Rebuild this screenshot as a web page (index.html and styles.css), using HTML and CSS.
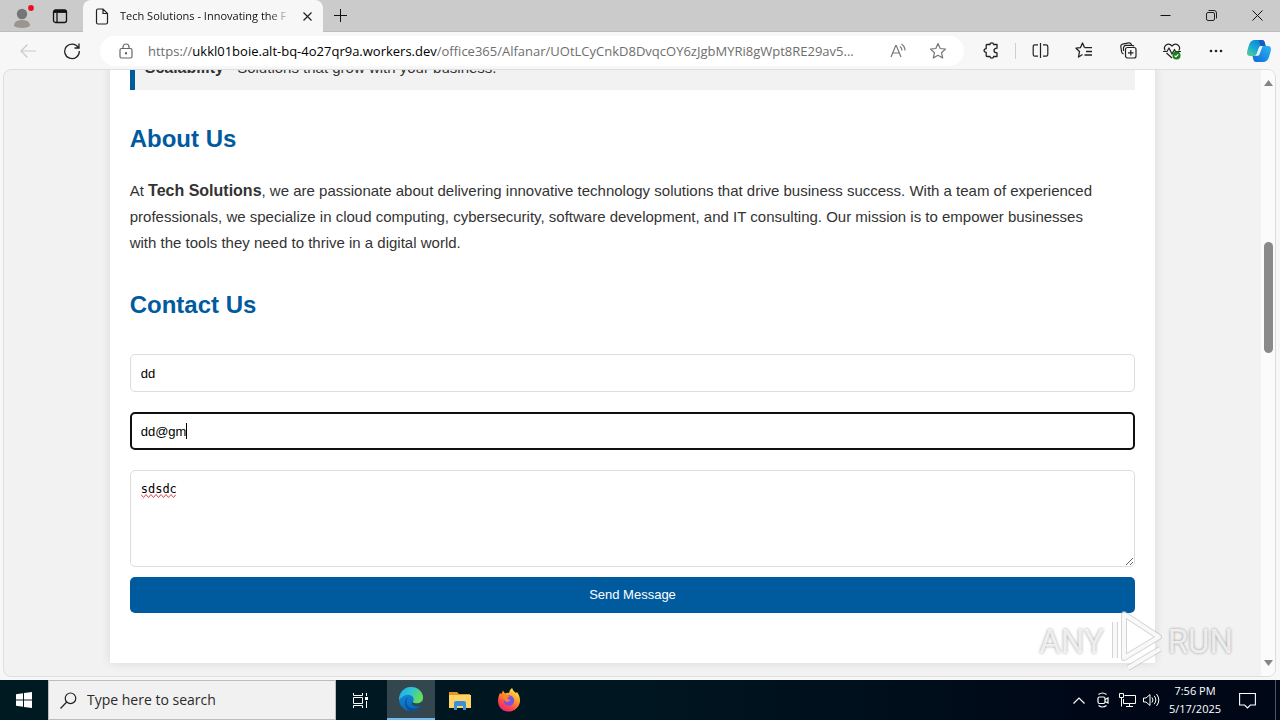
FILE: index.html
```html
<!DOCTYPE html>
<html lang="en">
<head>
<meta charset="utf-8">
<title>Tech Solutions - Innovating the Future</title>
<link rel="stylesheet" href="styles.css">
</head>
<body>
<header class="tabstrip">
  <button class="strip-btn avatar" aria-label="Profile">
    <svg width="24" height="24" viewBox="-1 0 24 24"><circle cx="11" cy="10" r="5.200" fill="#757575"/><path d="M3 22c0-4 3-6 8-6s8 2 8 6c-3 2.500-13 2.500-16 0z" fill="#9b9590"/><circle cx="20" cy="4" r="2.900" fill="#e81123"/></svg>
  </button>
  <button class="strip-btn workspace" aria-label="Tab actions">
    <svg width="16" height="16" viewBox="0 0 16 16" fill="none" stroke="#111" stroke-width="1.300"><rect x="1.500" y="2" width="13" height="12.500" rx="2"/><path d="M2 3.500h12" stroke-width="2.800"/><path d="M5 5v9"/></svg>
  </button>
  <div class="tab">
    <svg width="14" height="17" viewBox="0 0 14 17" fill="none" stroke="#222" stroke-width="1.200"><path d="M1.500 2.500q0-1.500 1.500-1.500h5l4.500 4.500v9q0 1.500-1.500 1.500h-8q-1.500 0-1.500-1.500zM8 1v4.500h4.500"/></svg>
    <span class="tab-title">Tech Solutions - Innovating the F</span>
    <button class="tab-close" aria-label="Close tab"><svg width="9" height="9" viewBox="0 0 9 9" stroke="#222" stroke-width="1.200"><path d="M.5.5l8 8m0-8l-8 8"/></svg></button>
  </div>
  <button class="new-tab" aria-label="New tab"><svg width="15" height="15" viewBox="0 0 15 15" stroke="#111"><path d="M7.500 1v13M1 7.500h13"/></svg></button>
  <div class="window-controls">
    <button aria-label="Minimize"><svg width="11" height="11" viewBox="0 0 11 11" stroke="#111"><path d="M.5 5.500h10"/></svg></button>
    <button aria-label="Restore"><svg width="11" height="11" viewBox="0 0 11 11" fill="none" stroke="#222"><rect x=".5" y="2.500" width="8" height="8" rx="1.500"/><path d="M2.500.5h5.500q2.500 0 2.500 2.500v5.500"/></svg></button>
    <button aria-label="Close"><svg width="11" height="11" viewBox="0 0 11 11" stroke="#111"><path d="M.5.5l10 10m0-10l-10 10"/></svg></button>
  </div>
</header>

<nav class="toolbar">
  <button class="tool" aria-label="Back"><svg width="18" height="16" viewBox="0 0 18 16" fill="none" stroke="#c9c9c9" stroke-width="1.200"><path d="M17 8H2m6.500-6.500L2 8l6.500 6.500"/></svg></button>
  <button class="tool" aria-label="Refresh"><svg width="18" height="18" viewBox="0 0 18 18" fill="none" stroke="#222" stroke-width="1.300"><path d="M15.500 6A7.300 7.300 0 1 0 16.300 9M16 1.500V6h-4.500"/></svg></button>
  <div class="address">
    <svg class="lock" width="14" height="16" viewBox="0 0 14 16" fill="none" stroke="#666" stroke-width="1.200"><rect x="1" y="5.500" width="12" height="9.500" rx="1.500"/><path d="M4 5.500V4a3 3 0 0 1 6 0v1.500"/><circle cx="7" cy="10.200" r=".6" fill="#666"/></svg>
    <a class="url" href="#">https://<span class="host">ukkl01boie.alt-bq-4o27qr9a.workers.dev</span>/office365/Alfanar/UOtLCyCnkD8DvqcOY6zJgbMYRi8gWpt8RE29av5...</a>
    <button class="pill-btn" aria-label="Read aloud"><svg width="16" height="16" viewBox="0 0 16 16" fill="none" stroke="#777" stroke-width="1.200"><path d="M1 14L5.700 2.500h.6L11 14M2.800 10h6.400M10 3.500q2 1.500 2 4M11.500 1q3.500 2.500 3.500 6.500"/></svg></button>
    <button class="pill-btn" aria-label="Add to favorites"><svg width="18" height="18" viewBox="0 0 18 18" fill="none" stroke="#777" stroke-width="1.200" stroke-linejoin="round"><path d="M9 1.500l2.200 5 5.300.6-4 3.600 1.200 5.300L9 13.300 4.300 16l1.200-5.300-4-3.600 5.300-.6z"/></svg></button>
  </div>
  <button class="tool" aria-label="Extensions"><svg width="17" height="17" viewBox="0 0 17 17" fill="none" stroke="#222" stroke-width="1.300" stroke-linejoin="round"><path d="M4 2.500h3q0-1.700 1.800-1.700t1.800 1.700h3.400v3.700q-3 .2-3 2.400t3 2.400v3.500h-3.400q0 1.700-1.800 1.700T7 14.500H4q-.8 0-.8-.8v-3.400Q1 10 1 8.500t2.200-1.800V3.300q0-.8.8-.8z"/></svg></button>
  <span class="divider"></span>
  <button class="tool" aria-label="Split screen"><svg width="17" height="15" viewBox="0 0 17 15" fill="none" stroke="#222" stroke-width="1.200"><path d="M6 1.800H3q-1.800 0-1.800 1.800v7.800q0 1.800 1.800 1.800h3M11 1.800h3q1.800 0 1.800 1.800v7.800q0 1.800-1.800 1.800h-3M8.500 0v15"/></svg></button>
  <button class="tool" aria-label="Favorites"><svg width="18" height="17" viewBox="0 0 18 17" fill="none" stroke="#222" stroke-width="1.300" stroke-linejoin="round"><path d="M9.500 5.600L7.500 1l-2 4.600-4.500.6 3.500 3.300L3.500 15l4-2.500M9.500 5.700H17M11 9.500h6M9.500 13H17"/></svg></button>
  <button class="tool" aria-label="Collections"><svg width="17" height="17" viewBox="0 0 17 17" fill="none" stroke="#222" stroke-width="1.200"><rect x="5.500" y="5.500" width="10.500" height="10.500" rx="2"/><path d="M10.800 8v5.500M8 10.800h5.500M3.500 12Q1.800 11.500 1.600 9.800L.8 4.500Q.6 2.500 2.600 2.100l6-1.200q2-.3 2.700 1.300l.3.800M3.500 9V6q0-2.600 2.600-2.600H12q1.500 0 2 .9"/></svg></button>
  <button class="tool" aria-label="Browser essentials"><svg width="18" height="18" viewBox="0 0 18 18" fill="none" stroke="#222" stroke-width="1.200" stroke-linejoin="round"><path d="M2.200 8.500C-.5 4.500 5-.5 9 4c4-4.500 9.500.5 6.800 4.500M3.500 11L9 16M0 9.500h4l2-3.500 3 6 2.500-4.500 1 2H18"/><circle cx="13.500" cy="13.500" r="4" fill="#16811d" stroke="none"/><path d="M11.600 13.600l1.300 1.300 2.400-2.500" stroke="#fff"/></svg></button>
  <button class="tool" aria-label="Settings and more"><svg width="14" height="4" viewBox="0 0 14 4" fill="#222"><circle cx="2" cy="2" r="1.300"/><circle cx="7" cy="2" r="1.300"/><circle cx="12" cy="2" r="1.300"/></svg></button>
  <button class="tool copilot" aria-label="Copilot">
    <svg width="24" height="22" viewBox="0 0 24 22">
      <defs>
        <linearGradient id="cpA" x1="0" y1="1" x2=".8" y2="0"><stop offset="0" stop-color="#5ad08a"/><stop offset=".5" stop-color="#18a9d8"/><stop offset="1" stop-color="#1176d8"/></linearGradient>
        <linearGradient id="cpB" x1="0" y1="1" x2="1" y2="0"><stop offset="0" stop-color="#1267d8"/><stop offset="1" stop-color="#27b8f5"/></linearGradient>
      </defs>
      <path d="M8 0h7q2 0 2.600 2l1 4h-4q-2 0-2.700 2l-2 6q-.7 2-2.900 2H3q-3 0-3-3 0-2 2-8 1.600-5 6-5z" fill="url(#cpA)"/>
      <path d="M16 22H9q-2 0-2.500-2l-1-4h3q2.500 0 3.200-2l2-6q.8-2 3.300-2h4q3 0 3 3 0 2-2 8-1.600 5-6 5z" fill="url(#cpB)"/>
      <path d="M12.500 6.500h3l-3.500 9H9z" fill="#e9f8ff"/>
      <path d="M12 0h3q2 0 2.600 2l1 4h-4q-1.500 0-1.800-2z" fill="#165bbf"/>
    </svg>
  </button>
</nav>

<section class="viewport">
  <div class="page">
    <main class="card">
      <p class="feature"><strong>Scalability</strong> - Solutions that grow with your business.</p>
      <h2>About Us</h2>
      <p class="about">At <strong>Tech Solutions</strong>, we are passionate about delivering innovative technology solutions that drive business success. With a team of experienced<br>professionals, we specialize in cloud computing, cybersecurity, software development, and IT consulting. Our mission is to empower businesses<br>with the tools they need to thrive in a digital world.</p>
      <h2>Contact Us</h2>
      <form class="contact">
        <input class="field" type="text" aria-label="Name" value="dd">
        <div class="field-wrap">
          <input class="field field-active" type="text" aria-label="Email" value="dd@gm">
          <span class="caret"></span>
        </div>
        <div class="field-wrap message-wrap">
          <textarea class="field message" aria-label="Message" spellcheck="false">sdsdc</textarea>
          <svg class="squiggle" width="35" height="4" viewBox="0 0 35 4" fill="none" stroke="#e5484d"><path d="M0 .5l2.500 3 2.500-3 2.500 3 2.500-3 2.500 3 2.500-3 2.500 3 2.500-3 2.500 3 2.500-3 2.500 3 2.500-3 2.500 3 2.500-3"/></svg>
        </div>
        <button class="send" type="button">Send Message</button>
      </form>
    </main>
  </div>
  <div class="scrollbar">
    <svg width="9" height="6" viewBox="0 0 9 6"><path d="M0 6l4.500-6L9 6z" fill="#858585"/></svg>
    <div class="track"><div class="thumb"></div></div>
    <svg width="9" height="6" viewBox="0 0 9 6"><path d="M0 0l4.500 6L9 0z" fill="#858585"/></svg>
  </div>
  <div class="watermark">
    <span>ANY</span>
    <svg width="60" height="64" viewBox="0 0 60 64" fill="none" stroke-linejoin="round">
      <g stroke="#b8b8b8" stroke-opacity=".6" stroke-width="6"><path d="M18 4v44L53 27zM9 12v36M22 58l32-19"/></g>
      <g stroke="#fff" stroke-opacity=".85" stroke-width="4"><path d="M18 4v44L53 27zM9 12v36M22 58l32-19"/></g>
    </svg>
    <span>RUN</span>
  </div>
</section>

<footer class="taskbar">
  <button class="task" aria-label="Start"><svg width="16" height="16" viewBox="0 0 16 16" fill="#fff"><path d="M0 2.200L7 1.200v6.300H0zM8 1.100L16 0v7.500H8zM0 8.500h7v6.300L0 13.800zM8 8.500h8V16l-8-1.100z"/></svg></button>
  <label class="search">
    <svg width="17" height="17" viewBox="0 0 17 17" fill="none" stroke="#222" stroke-width="1.200"><circle cx="10.500" cy="6.300" r="5.300"/><path d="M6.700 10L.5 16.500"/></svg>
    <input type="text" placeholder="Type here to search" aria-label="Search">
  </label>
  <button class="task" aria-label="Task view"><svg width="17" height="17" viewBox="0 0 17 17" fill="none" stroke="#fff"><path d="M1.500 1v2.500h9V1M1.500 16v-2.500h9V16M1.500 5.500h9v6h-9zM14.500 1v3M14.500 9v7"/><path d="M13 5h3v3h-3z" fill="#fff" stroke="none"/></svg></button>
  <div class="apps">
    <button class="task task-active" aria-label="Microsoft Edge">
      <svg width="24" height="24" viewBox="0 0 24 24">
        <defs><linearGradient id="egT" x1="0" y1="0" x2="1" y2=".4"><stop offset="0" stop-color="#24a9e8"/><stop offset=".5" stop-color="#2cc3d5"/><stop offset="1" stop-color="#66df58"/></linearGradient><linearGradient id="egL" x1="0" y1="0" x2=".3" y2="1"><stop offset="0" stop-color="#1995dd"/><stop offset="1" stop-color="#0868bd"/></linearGradient></defs>
        <circle cx="12" cy="12" r="12" fill="url(#egL)"/>
        <path d="M1 8C3 3 7 0 12 0c7 0 12 5 12 10.500 0 4-3 6-6.300 6-2.700 0-4.200-1-3.700-2 1.500-2 .5-5.500-3-6.500C7 7 3 9 0 13q0-3 1-5z" fill="url(#egT)"/>
        <path d="M9 10c-4 6 0 12 6.500 11.500 3 0 5-1.500 7-3.500-2 3.600-5.700 6-10.500 6C6 23 4 13 9 10z" fill="#0b4e9c"/>
        <path d="M14 14.500c-.5 1 1 2 3.700 2 2.300 0 4.500-1 5.600-2.800l.7 3-1.500 1.700q-3 1.800-6.500.8c-3-.8-4-3-2-4.700z" fill="#34474f"/>
      </svg>
    </button>
    <button class="task" aria-label="File Explorer"><svg width="22" height="19" viewBox="0 0 22 19"><path d="M0 1h8l2 2h11v4H0z" fill="#e8981c"/><path d="M0 4h22v13H0z" fill="#ffd56a"/><path d="M5 19v-7q0-2 2-2h8q2 0 2 2v7h-3v-4H8v4z" fill="#3a91d8"/></svg></button>
    <button class="task" aria-label="Firefox">
      <svg width="24" height="24" viewBox="0 0 24 24">
        <defs><linearGradient id="ff" x1=".8" y1="0" x2=".2" y2="1"><stop offset="0" stop-color="#fff04a"/><stop offset=".4" stop-color="#ff9a28"/><stop offset=".7" stop-color="#ff4a45"/><stop offset="1" stop-color="#e91f80"/></linearGradient></defs>
        <path d="M3 5l1.500 1L6 2.500l2 3q2-1 4-.5 0-3 3-5 1 3 4 5l1-1c3 4 4 9 2 13-3 6-10 8-15.500 5.500C0 19 0 11 3 5z" fill="url(#ff)"/>
        <circle cx="12" cy="12.500" r="5.200" fill="#7951e8"/><path d="M5 7c3-1 6 0 8 2-2 0-3 1-2.500 2l3 1c-1 2-4 2.500-5.500 1z" fill="#ff8425"/>
      </svg>
    </button>
  </div>
  <div class="tray">
    <button class="tray-btn" aria-label="Hidden icons"><svg width="12" height="7" viewBox="0 0 12 7" fill="none" stroke="#fff" stroke-width="1.200"><path d="M.5 6.500L6 1l5.500 5.500"/></svg></button>
    <button class="tray-btn" aria-label="Meet now"><svg width="12" height="16" viewBox="0 0 12 16" fill="none" stroke="#fff" stroke-width="1.200"><rect x="1" y="5" width="7" height="6.500" rx="1.500"/><path d="M8 7.500L11 6v5L8 9.500M1.500 2.500Q5.500-.5 9.500 2.500M1.500 13.500q4 3 8 0"/></svg></button>
    <button class="tray-btn" aria-label="Network"><svg width="17" height="14" viewBox="0 0 17 14" fill="none" stroke="#fff"><path d="M5.500 2.500h11v8h-12V6M10.500 10.500v3M7 13.500h7M.5.500h4v4h-4zM2.500 4.500v9"/></svg></button>
    <button class="tray-btn" aria-label="Volume"><svg width="17" height="14" viewBox="0 0 17 14" fill="none" stroke="#fff"><path d="M.5 5h2.500l4-3.500v11L3 9H.5zM9 4.500q2 2.500 0 5M11.200 2.800q3.300 4.200 0 8.400M13.500 1q4.700 6 0 12"/></svg></button>
    <div class="clock"><span>7:56 PM</span><span>5/17/2025</span></div>
    <button class="notify" aria-label="Notifications"><svg width="17" height="17" viewBox="0 0 17 17" fill="none" stroke="#fff" stroke-width="1.100"><path d="M.6 1.500h15.800v11.500h-5L8.500 16l-2.900-3h-5z"/></svg></button>
    <div class="show-desktop"></div>
  </div>
</footer>
</body>
</html>
```

FILE: styles.css
```css
* { box-sizing: border-box; }
body {
  margin: 0;
  height: 100vh;
  display: flex;
  flex-direction: column;
  overflow: hidden;
  background: #f7f7f7;
  font-family: "Open Sans", "Noto Sans", sans-serif;
}
button {
  border: 0;
  padding: 0;
  background: none;
  font: inherit;
  display: flex;
  align-items: center;
  justify-content: center;
}
svg { flex: none; display: block; }

/* Tab strip */
.tabstrip {
  height: 32px;
  flex: none;
  display: flex;
  padding-left: 4px;
  background: #cbcbcb;
  border-bottom: 1px solid #bdbdbd;
}
.strip-btn { width: 40px; }
.avatar { width: 36px; }
.tab {
  width: 240px;
  height: 32px;
  margin-left: 3px;
  padding: 0 10px 0 12px;
  display: flex;
  align-items: center;
  gap: 11px;
  background: #f7f7f7;
  border-radius: 8px 8px 0 0;
}
.tab-title {
  flex: 1;
  white-space: nowrap;
  font-size: 11px;
  line-height: 18px;
  color: #111;
  -webkit-mask-image: linear-gradient(90deg, #000 88%, transparent);
  mask-image: linear-gradient(90deg, #000 88%, transparent);
}
.tab-close { width: 12px; height: 20px; }
.new-tab { width: 34px; }
.window-controls { margin-left: auto; display: flex; }
.window-controls button { width: 46px; }

/* Toolbar */
.toolbar {
  height: 37px;
  flex: none;
  display: flex;
  align-items: center;
  padding-left: 6px;
}
.tool { width: 44px; height: 32px; flex: none; }
.copilot { width: 42px; }
.divider { width: 1px; height: 16px; margin: 0 2px; background: #cfcfcf; }
.address {
  flex: 1;
  min-width: 0;
  height: 30px;
  margin: 0 5px 0 6px;
  padding: 0 6px 0 19px;
  display: flex;
  align-items: center;
  border-radius: 15px;
  background: #fff;
}
.url {
  flex: 1;
  min-width: 0;
  overflow: hidden;
  white-space: nowrap;
  margin-left: 15px;
  font-size: 13px;
  line-height: 20px;
  color: #6e6e6e;
  text-decoration: none;
}
.host { color: #000; }
.pill-btn { width: 40px; height: 28px; flex: none; }

/* Page viewport */
.viewport {
  position: relative;
  flex: 1;
  min-height: 0;
  margin: 0 4px 3px 3px;
  display: flex;
  overflow: hidden;
  border: 1px solid #dedede;
  border-radius: 8px;
  background: #f2f2f2;
}
.page {
  flex: 1;
  font-family: "Liberation Sans", Arial, sans-serif;
  font-size: 15px;
  line-height: 26px;
  color: #333;
}
.page strong { font-size: 16px; line-height: 20px; }
.card {
  width: calc(80% + 40px);
  margin: -26px auto 0;
  padding: 0 20px 50px;
  background: #fff;
  box-shadow: 0 0 10px rgba(0, 0, 0, 0.1);
}
.feature {
  margin: 0;
  padding: 11px 10px 9px;
  border-left: 5px solid #005a9e;
  background: #f2f2f2;
}
h2 {
  margin: 30px 0 20px;
  font-size: 24px;
  line-height: 38px;
  color: #005a9e;
}
.about { margin: 0; }
.contact {
  display: flex;
  flex-direction: column;
  gap: 20px;
  margin-top: 30px;
}
.field {
  display: block;
  width: 100%;
  height: 38px;
  margin: 0;
  padding: 10px;
  border: 1px solid #ddd;
  border-radius: 5px;
  background: #fff;
  font-family: "Liberation Sans", Arial, sans-serif;
  font-size: 13px;
  color: #000;
  outline: 0;
}
.field-active { border: 2px solid #101010; padding: 9px; }
.field-wrap { position: relative; }
.caret {
  position: absolute;
  left: 56px;
  top: 11px;
  width: 1px;
  height: 16px;
  background: #000;
}
.message-wrap { margin-bottom: -10px; }
.message {
  height: 97px;
  font-family: "DejaVu Sans Mono", monospace;
  font-size: 12px;
  line-height: 16px;
  resize: vertical;
}
.squiggle { position: absolute; left: 11px; top: 24px; }
.send {
  height: 36px;
  border-radius: 5px;
  background: #005a9e;
  color: #fff;
  font-family: "Liberation Sans", Arial, sans-serif;
  font-size: 13px;
}

.scrollbar {
  width: 14px;
  flex: none;
  display: flex;
  flex-direction: column;
  align-items: center;
  padding: 10px 0;
  background: #fbfbfb;
}
.track { flex: 1; padding-top: 156px; }
.thumb { width: 9px; height: 111px; border-radius: 5px; background: #8a8a8a; }

.watermark {
  position: absolute;
  right: 42px;
  bottom: 2px;
  display: flex;
  align-items: center;
  gap: 2px;
  font-family: Roboto, "Liberation Sans", sans-serif;
  font-size: 33px;
  line-height: 40px;
  color: rgba(255, 255, 255, 0.8);
  text-shadow: 0 0 3px rgba(0, 0, 0, 0.4);
}

/* Taskbar */
.taskbar {
  height: 40px;
  flex: none;
  display: flex;
  background: linear-gradient(90deg, #001a22, #001620 50%, #000818 85%);
  color: #fff;
}
.task { width: 48px; margin-right: 1px; }
.task:first-child { margin: 0; }
.search {
  width: 288px;
  display: flex;
  align-items: center;
  gap: 10px;
  padding: 0 11px;
  border: 1px solid #bdbdbd;
  background: #f1f1f1;
}
.search input {
  flex: 1;
  min-width: 0;
  border: 0;
  padding: 0;
  outline: 0;
  background: none;
  font: 14px/20px "Open Sans", "Noto Sans", sans-serif;
}
.search input::placeholder { color: #2b2b2b; opacity: 1; }
.apps { display: flex; margin-left: 2px; }
.apps .task-active { background: #34474f; border-bottom: 2px solid #76b9ed; margin-right: 1px; }
.tray { margin-left: auto; display: flex; }
.tray-btn { width: 24px; }
.clock {
  width: 64px;
  display: flex;
  flex-direction: column;
  align-items: center;
  justify-content: center;
  font-size: 11px;
  line-height: 18px;
}
.notify { width: 40px; }
.show-desktop { width: 13px; background: linear-gradient(#4a5560, #4a5560) 8px 0 / 1px 100% no-repeat; }
```
